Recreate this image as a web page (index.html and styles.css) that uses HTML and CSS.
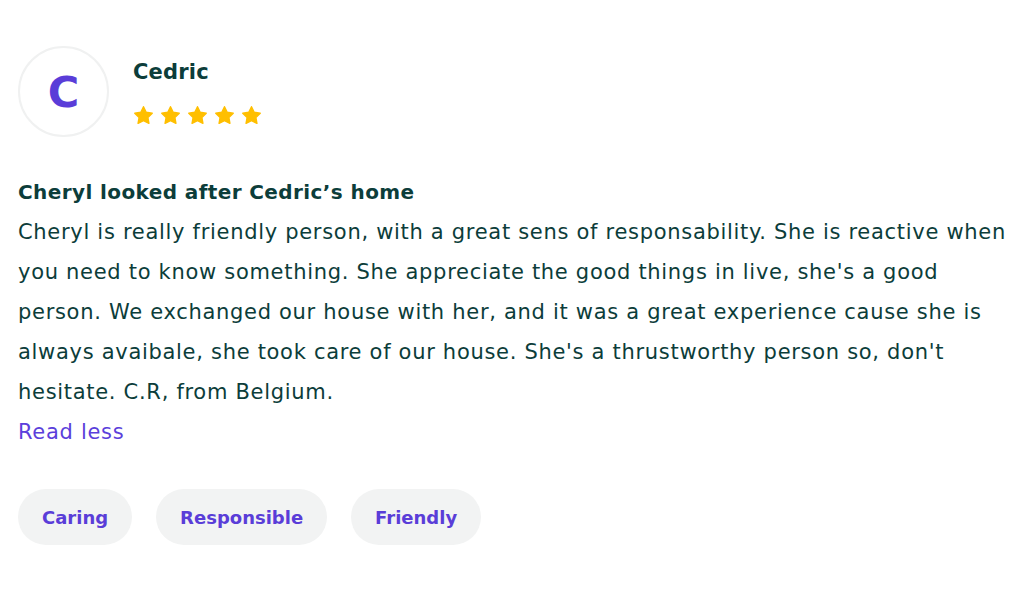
FILE: index.html
```html
<!DOCTYPE html>
<html lang="en">
<head>
<meta charset="utf-8">
<link rel="stylesheet" href="styles.css">
</head>
<body>
<article class="review">
  <header class="review-head">
    <div class="avatar">C</div>
    <div class="who">
      <div class="name">Cedric</div>
      <div class="stars">
        <svg viewBox="0 0 24 24"><path d="M12 2l3.1 6.3 6.9 1-5 4.9 1.2 6.8L12 17.8l-6.2 3.2 1.2-6.8-5-4.9 6.9-1z"/></svg>
        <svg viewBox="0 0 24 24"><path d="M12 2l3.1 6.3 6.9 1-5 4.9 1.2 6.8L12 17.8l-6.2 3.2 1.2-6.8-5-4.9 6.9-1z"/></svg>
        <svg viewBox="0 0 24 24"><path d="M12 2l3.1 6.3 6.9 1-5 4.9 1.2 6.8L12 17.8l-6.2 3.2 1.2-6.8-5-4.9 6.9-1z"/></svg>
        <svg viewBox="0 0 24 24"><path d="M12 2l3.1 6.3 6.9 1-5 4.9 1.2 6.8L12 17.8l-6.2 3.2 1.2-6.8-5-4.9 6.9-1z"/></svg>
        <svg viewBox="0 0 24 24"><path d="M12 2l3.1 6.3 6.9 1-5 4.9 1.2 6.8L12 17.8l-6.2 3.2 1.2-6.8-5-4.9 6.9-1z"/></svg>
      </div>
    </div>
  </header>
  <h2 class="title">Cheryl looked after Cedric’s home</h2>
  <p class="body">Cheryl is really friendly person, with a great sens of responsability. She is reactive when you need to know something. She appreciate the good things in live, she's a good person. We exchanged our house with her, and it was a great experience cause she is always avaibale, she took care of our house. She's a thrustworthy person so, don't hesitate. C.R, from Belgium.</p>
  <a class="toggle" href="#">Read less</a>
  <ul class="tags">
    <li class="tag">Caring</li>
    <li class="tag">Responsible</li>
    <li class="tag">Friendly</li>
  </ul>
</article>
</body>
</html>
```

FILE: styles.css
```css
* { box-sizing: border-box; }
html, body { margin: 0; padding: 0; background: #fff; }
body {
  font-family: "DejaVu Sans", "Open Sans", sans-serif;
  color: #0c3d3a;
}
.review {
  padding: 46px 0 0 18px;
  width: 1013px;
}
.review-head {
  display: flex;
  align-items: flex-start;
  gap: 24px;
}
.avatar {
  width: 91px;
  height: 91px;
  border-radius: 50%;
  border: 2px solid #f0f1f1;
  display: flex;
  align-items: center;
  justify-content: center;
  font-size: 43px;
  font-weight: 700;
  color: #5a3dd8;
}
.who {
  padding-top: 12px;
}
.name {
  font-size: 21px;
  font-weight: 700;
  line-height: 28px;
  letter-spacing: 0.2px;
}
.stars {
  display: flex;
  gap: 6px;
  margin-top: 19px;
}
.stars svg {
  width: 21px;
  height: 21px;
  fill: #ffbf00;
  stroke: #ffbf00;
  stroke-width: 1.6;
  stroke-linejoin: round;
}
.title {
  margin: 40px 0 0;
  font-size: 20px;
  font-weight: 700;
  line-height: 30px;
  letter-spacing: 0.4px;
}
.body {
  margin: 5px 0 0;
  font-size: 21px;
  line-height: 40px;
  letter-spacing: 0.7px;
}
.toggle {
  display: inline-block;
  font-size: 21px;
  line-height: 40px;
  letter-spacing: 0.7px;
  color: #5b3fdb;
  text-decoration: none;
}
.tags {
  list-style: none;
  margin: 37px 0 0;
  padding: 0;
  display: flex;
  gap: 24px;
}
.tag {
  background: #f2f3f3;
  border-radius: 28px;
  height: 56px;
  padding: 0 24px;
  display: flex;
  align-items: center;
  font-size: 18px;
  font-weight: 700;
  color: #5a3dd8;
}
```
